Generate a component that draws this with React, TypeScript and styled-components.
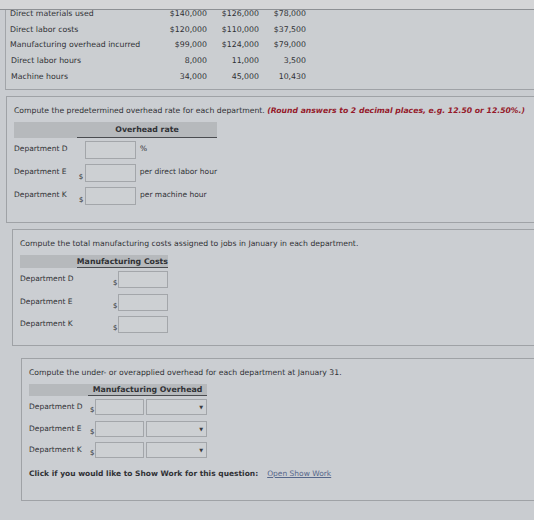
import React from "react";
import styled, { createGlobalStyle } from "styled-components";

const GlobalStyle = createGlobalStyle`
  html, body {
    margin: 0;
    padding: 0;
    background: #c9ccd0;
    overflow: hidden;
  }
  body {
    font-family: "DejaVu Sans", Verdana, sans-serif;
    color: #303135;
    font-size: 7.5px;
  }
`;

const Page = styled.div`
  width: 534px;
  height: 520px;
  overflow: hidden;
  display: flex;
  flex-direction: column;
`;

const TopStrip = styled.div`
  height: 9px;
  background: #d4d5d7;
  border-bottom: 1px solid #8d9094;
`;

const DataPanel = styled.div`
  margin-left: 5px;
  height: 79px;
  overflow: hidden;
  border-left: 1px solid #a2a5a9;
  border-bottom: 1px solid #9fa2a6;
  background: #cbced1;
`;

const DataTable = styled.div`
  margin-top: -4.5px;
  display: grid;
  grid-template-columns: 145px 52px 52px 47px;
  grid-auto-rows: 15.8px;
  align-items: center;
  font-size: 7.8px;
  padding-left: 4px;
`;

const DataLabel = styled.span<{ $shift?: number }>`
  padding-left: ${({ $shift }) => $shift ?? 0}px;
  white-space: nowrap;
`;

const DataValue = styled.span`
  text-align: right;
  white-space: nowrap;
`;

const Panel = styled.section<{ $indent: number; $gap: number; $pad: number }>`
  margin: ${({ $gap }) => $gap}px 0 0 ${({ $indent }) => $indent}px;
  padding: 9px 0 ${({ $pad }) => $pad}px 7px;
  border: 1px solid #9fa2a6;
  border-right: none;
  background: #cbced2;
`;

const Prompt = styled.p`
  margin: 0 0 7px;
  white-space: nowrap;
  font-size: 7.7px;
`;

const Hint = styled.span`
  color: #95192a;
  font-weight: bold;
  font-style: italic;
`;

const Table = styled.div<{ $width: number }>`
  width: ${({ $width }) => $width}px;
  display: flex;
  flex-direction: column;
`;

const HeaderBar = styled.div<{ $offset: number; $height: number }>`
  height: ${({ $height }) => $height}px;
  background: #b6b9bc;
  display: flex;
  justify-content: flex-end;
  padding-left: ${({ $offset }) => $offset}px;
`;

const HeaderCell = styled.div`
  flex: 1;
  display: flex;
  align-items: center;
  justify-content: center;
  font-weight: bold;
  font-size: 7.8px;
  border-bottom: 1.5px solid #4a4c50;
  white-space: nowrap;
`;

const Rows = styled.div<{ $gap: number }>`
  display: flex;
  flex-direction: column;
  gap: ${({ $gap }) => $gap}px;
  margin-top: 3px;
`;

const Row = styled.div`
  display: flex;
  align-items: center;
`;

const Label = styled.span<{ $width: number }>`
  width: ${({ $width }) => $width}px;
  white-space: nowrap;
  align-self: flex-start;
  padding-top: 3px;
`;

const Dollar = styled.span<{ $width: number }>`
  width: ${({ $width }) => $width}px;
  align-self: flex-end;
  padding-bottom: 1px;
  font-size: 7px;
`;

const Field = styled.input<{ $width: number; $height: number }>`
  box-sizing: border-box;
  width: ${({ $width }) => $width}px;
  height: ${({ $height }) => $height}px;
  margin: 0;
  padding: 0 3px;
  border: 1px solid #a3a6aa;
  background: #cdd0d3;
  font: inherit;
`;

const Suffix = styled.span`
  margin-left: 4px;
  white-space: nowrap;
  align-self: flex-start;
  padding-top: 3px;
`;

const Select = styled.div<{ $width: number; $height: number }>`
  box-sizing: border-box;
  width: ${({ $width }) => $width}px;
  height: ${({ $height }) => $height}px;
  margin-left: 2px;
  border: 1px solid #a3a6aa;
  background: #cdd0d3;
  display: flex;
  align-items: center;
  justify-content: flex-end;
  padding-right: 3px;
  font-size: 5px;
  color: #3a3c40;
`;

const Footer = styled.div`
  margin-top: 11px;
  display: flex;
  gap: 9px;
  font-weight: bold;
  white-space: nowrap;
`;

const ShowWork = styled.a`
  font-weight: normal;
  color: #56678a;
  text-decoration: underline;
`;

const costs = [
  { label: "Direct materials used", values: ["$140,000", "$126,000", "$78,000"] },
  { label: "Direct labor costs", values: ["$120,000", "$110,000", "$37,500"] },
  { label: "Manufacturing overhead incurred", values: ["$99,000", "$124,000", "$79,000"] },
  { label: "Direct labor hours", values: ["8,000", "11,000", "3,500"] },
  { label: "Machine hours", values: ["34,000", "45,000", "10,430"] },
];

const rateRows = [
  { dept: "Department D", dollar: false, unit: "%" },
  { dept: "Department E", dollar: true, unit: "per direct labor hour" },
  { dept: "Department K", dollar: true, unit: "per machine hour" },
];

const departments = ["Department D", "Department E", "Department K"];

export default function App() {
  return (
    <Page>
      <GlobalStyle />
      <TopStrip />

      <DataPanel>
        <DataTable>
          {costs.map((row, i) => (
            <React.Fragment key={row.label}>
              <DataLabel $shift={i > 2 ? 1 : 0}>{row.label}</DataLabel>
              {row.values.map((v, j) => (
                <DataValue key={j}>{v}</DataValue>
              ))}
            </React.Fragment>
          ))}
        </DataTable>
      </DataPanel>

      <Panel $indent={6} $gap={6} $pad={17}>
        <Prompt>
          Compute the predetermined overhead rate for each department.{" "}
          <Hint>(Round answers to 2 decimal places, e.g. 12.50 or 12.50%.)</Hint>
        </Prompt>
        <Table $width={203}>
          <HeaderBar $offset={63} $height={16}>
            <HeaderCell>Overhead rate</HeaderCell>
          </HeaderBar>
          <Rows $gap={5}>
            {rateRows.map((r) => (
              <Row key={r.dept}>
                <Label $width={65}>{r.dept}</Label>
                <Dollar $width={6}>{r.dollar ? "$" : ""}</Dollar>
                <Field $width={51} $height={18} />
                <Suffix>{r.unit}</Suffix>
              </Row>
            ))}
          </Rows>
        </Table>
      </Panel>

      <Panel $indent={12} $gap={6} $pad={12}>
        <Prompt>Compute the total manufacturing costs assigned to jobs in January in each department.</Prompt>
        <Table $width={148}>
          <HeaderBar $offset={59} $height={13}>
            <HeaderCell>Manufacturing Costs</HeaderCell>
          </HeaderBar>
          <Rows $gap={5.5}>
            {departments.map((d) => (
              <Row key={d}>
                <Label $width={93}>{d}</Label>
                <Dollar $width={5}>$</Dollar>
                <Field $width={50} $height={17} />
              </Row>
            ))}
          </Rows>
        </Table>
      </Panel>

      <Panel $indent={21} $gap={12} $pad={22}>
        <Prompt>Compute the under- or overapplied overhead for each department at January 31.</Prompt>
        <Table $width={178}>
          <HeaderBar $offset={59} $height={12}>
            <HeaderCell>Manufacturing Overhead</HeaderCell>
          </HeaderBar>
          <Rows $gap={5.5}>
            {departments.map((d) => (
              <Row key={d}>
                <Label $width={61}>{d}</Label>
                <Dollar $width={5}>$</Dollar>
                <Field $width={49} $height={16} />
                <Select $width={61} $height={16}>▼</Select>
              </Row>
            ))}
          </Rows>
        </Table>
        <Footer>
          <span>Click if you would like to Show Work for this question:</span>
          <ShowWork href="#">Open Show Work</ShowWork>
        </Footer>
      </Panel>
    </Page>
  );
}
